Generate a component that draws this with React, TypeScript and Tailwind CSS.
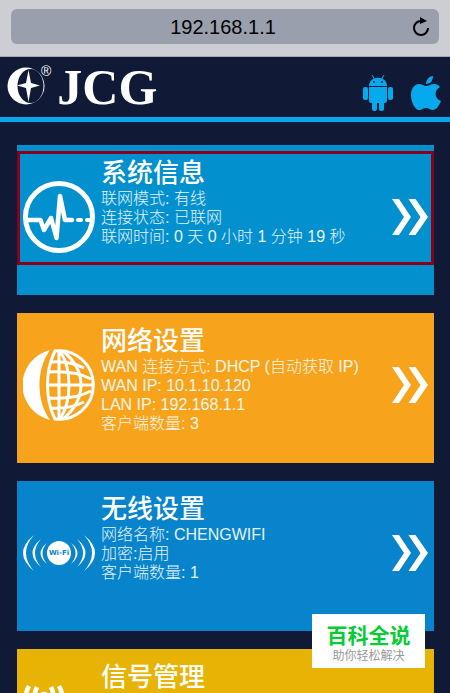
import React from 'react';

type Card = {
  title: string;
  lines: string[];
  color: string;
  icon: React.ReactNode;
  highlighted?: boolean;
};

function PulseIcon() {
  return (
    <svg viewBox="0 0 72 72" className="w-full" fill="none" stroke="#fff" strokeLinecap="round" strokeLinejoin="round">
      <circle cx="36" cy="36" r="33.5" strokeWidth="5" />
      <path d="M4 39H17.5L21 49L28 37L33.5 57L37 15L42 39H49" strokeWidth="4.5" />
      <path d="M55 39H58M64 39H69" strokeWidth="4" />
    </svg>
  );
}

function GlobeIcon() {
  return (
    <svg viewBox="0 0 72 72" className="w-full" fill="none" stroke="#fff" strokeWidth="3">
      <path d="M27 1A36 36 0 0 0 27 71C13 52 13 20 27 1Z" fill="#fff" stroke="none" />
      <path d="M32 2A34.25 34.25 0 1 1 32 70C22 50 22 22 32 2Z" />
      <path d="M36 2V70M37 2C49 20 49 52 37 70M40 2C64 22 64 50 40 70" />
      <path d="M28 13C43 12 53 15 61 19M25 23C43 22 59 25 68 30M24 36H70M25 49C43 50 59 47 68 42M28 59C43 60 53 57 61 53" />
    </svg>
  );
}

function WifiIcon() {
  return (
    <svg viewBox="0 0 72 72" className="w-full" fill="#fff">
      <circle cx="36" cy="36" r="12" />
      <path d="M24 26Q11 36 24 47Q15 36 24 26ZM18 22Q1 36 18 50Q6 36 18 22ZM11 18Q-11 36 11 54Q-5 36 11 18Z" />
      <path d="M48 26Q61 36 48 47Q57 36 48 26ZM54 22Q71 36 54 50Q66 36 54 22ZM61 18Q83 36 61 54Q77 36 61 18Z" />
      <text x="36" y="38" textAnchor="middle" fontSize="7" fontWeight="bold" fontFamily="DejaVu Sans" fill="#0784cb">
        Wi-Fi
      </text>
    </svg>
  );
}

function SignalIcon() {
  return (
    <svg viewBox="0 0 72 72" className="w-full" fill="none" stroke="#fff" strokeWidth="4.5">
      <path d="M6 1C1 10 1 22 6 31M14 2C10 11 10 20 14 29M36 1C41 10 41 22 36 31M28 2C32 11 32 20 28 29" />
      <circle cx="21" cy="12" r="3" fill="#fff" />
      <path d="M21 16L9 70M21 16L33 70M13 48H29" />
    </svg>
  );
}

function ChevronsIcon() {
  return (
    <svg viewBox="0 0 36 36" className="w-9 shrink-0" fill="#fff">
      <path d="M0 0H7L19 18L7 36H0L12 18Z" />
      <path d="M16.5 0H23.5L36 18L23.5 36H16.5L28.5 18Z" />
    </svg>
  );
}

const cards: Card[] = [
  {
    title: '系统信息',
    lines: ['联网模式: 有线', '连接状态: 已联网', '联网时间: 0 天 0 小时 1 分钟 19 秒'],
    color: 'bg-[#0390ce]',
    icon: <PulseIcon />,
    highlighted: true,
  },
  {
    title: '网络设置',
    lines: ['WAN 连接方式: DHCP (自动获取 IP)', 'WAN IP: 10.1.10.120', 'LAN IP: 192.168.1.1', '客户端数量: 3'],
    color: 'bg-[#f7a31c]',
    icon: <GlobeIcon />,
  },
  {
    title: '无线设置',
    lines: ['网络名称: CHENGWIFI', '加密:启用', '客户端数量: 1'],
    color: 'bg-[#0784cb]',
    icon: <WifiIcon />,
  },
  {
    title: '信号管理',
    lines: [],
    color: 'bg-[#e7b405]',
    icon: <SignalIcon />,
  },
];

function MenuCard({ card }: { card: Card }) {
  return (
    <a href="#" className={`relative flex min-h-[150px] items-start px-1.5 pb-2 text-white ${card.color}`}>
      <div className="mt-9 w-18 shrink-0">{card.icon}</div>
      <div className="ml-1.5 min-w-0 flex-1 pt-3">
        <h2 className="text-[26px] leading-8 font-medium">{card.title}</h2>
        {card.lines.map((line) => (
          <p key={line} className="text-[16px] leading-[19px] font-light whitespace-nowrap text-white/90">
            {line}
          </p>
        ))}
      </div>
      <div className="mt-[54px]">
        <ChevronsIcon />
      </div>
      {card.highlighted && (
        <span className="pointer-events-none absolute inset-x-0 top-1.5 h-[114px] border-3 border-[#8b0019]" />
      )}
    </a>
  );
}

export default function App() {
  return (
    <div className="h-screen overflow-hidden bg-[#101936] font-['Liberation_Sans','Noto_Sans_CJK_SC',sans-serif]">
      {/* Browser bar */}
      <div className="border-b border-[#a5a7ae] bg-[#cdced3] px-[11px] pt-[9px] pb-3">
        <div className="flex h-[35px] items-center rounded-md bg-[#9a9fae] pr-2 pl-6">
          <input
            aria-label="Address"
            className="min-w-0 flex-1 bg-transparent text-center text-[20px] text-black outline-none"
            defaultValue="192.168.1.1"
          />
          <button type="button" aria-label="Reload">
            <svg viewBox="0 0 20 20" className="size-5" fill="none" stroke="#000" strokeWidth="2">
              <path d="M10 4A7 7 0 1 0 17 11" />
              <path d="M9 0L16 4L9 7Z" fill="#000" stroke="none" />
            </svg>
          </button>
        </div>
      </div>

      <header className="flex h-[65px] items-start justify-between border-b-5 border-[#07a6ee] pr-[9px] pl-[7px]">
        <h1 className="flex items-start text-white">
          <svg viewBox="0 0 38 38" className="mt-2.5 size-[38px]">
            <circle cx="19" cy="19" r="18.5" fill="#fff" />
            <ellipse cx="23.5" cy="19" rx="13" ry="17" fill="#101936" />
            <path d="M21.5 3L24 16L33 18.5L24 21L21.5 35L19 21L10 18.5L19 16Z" fill="#fff" />
          </svg>
          <span className="mt-1.5 -ml-1 text-[14px] leading-4">®</span>
          <span className="ml-1.5 font-['Liberation_Serif',serif] text-[50px] leading-[60px] font-bold">JCG</span>
        </h1>
        <nav className="flex gap-[18px] pt-[18px]">
          <a href="#" aria-label="Android">
            <svg viewBox="0 0 30 36" className="h-9 w-[30px]" fill="#07a9ee">
              <path d="M6 11C6 0 24 0 24 11Z" />
              <path d="M9 0L12 5M21 0L18 5" stroke="#07a9ee" />
              <circle cx="11" cy="7" r="1" fill="#101936" />
              <circle cx="19" cy="7" r="1" fill="#101936" />
              <path d="M6 12H24V26Q24 28 22 28H8Q6 28 6 26Z" />
              <rect x="0" y="12" width="5" height="13" rx="2" />
              <rect x="25" y="12" width="5" height="13" rx="2" />
              <rect x="9" y="25" width="5" height="11" rx="2" />
              <rect x="16" y="25" width="5" height="11" rx="2" />
            </svg>
          </a>
          <a href="#" aria-label="Apple">
            <svg viewBox="0 0 30 36" className="h-9 w-[30px]" fill="#07a9ee">
              <path d="M15 9C15 5 18 1 22 1C22 6 19 9 15 9Z" />
              <path d="M15 11C18 11 20 9 23 9Q27 9 29 12C22 16 24 24 30 26C28 31 25 35 22 35C19 35 18 33 15 33C12 33 11 35 8 35C4 35 0 27 0 20C0 13 4 9 8 9C11 9 13 11 15 11Z" />
            </svg>
          </a>
        </nav>
      </header>

      <main className="flex flex-col gap-[18px] pt-[23px] pr-4 pl-[17px]">
        {cards.map((card) => (
          <MenuCard key={card.title} card={card} />
        ))}
      </main>

      {/* Site badge */}
      <div className="fixed right-[25px] bottom-[25px] flex h-[54px] w-[113px] flex-col items-center justify-center bg-white pt-1.5">
        <strong className="text-[21px] leading-6 font-bold text-[#08cc35]">百科全说</strong>
        <span className="text-[12px] leading-4 text-[#999]">助你轻松解决</span>
      </div>
    </div>
  );
}
